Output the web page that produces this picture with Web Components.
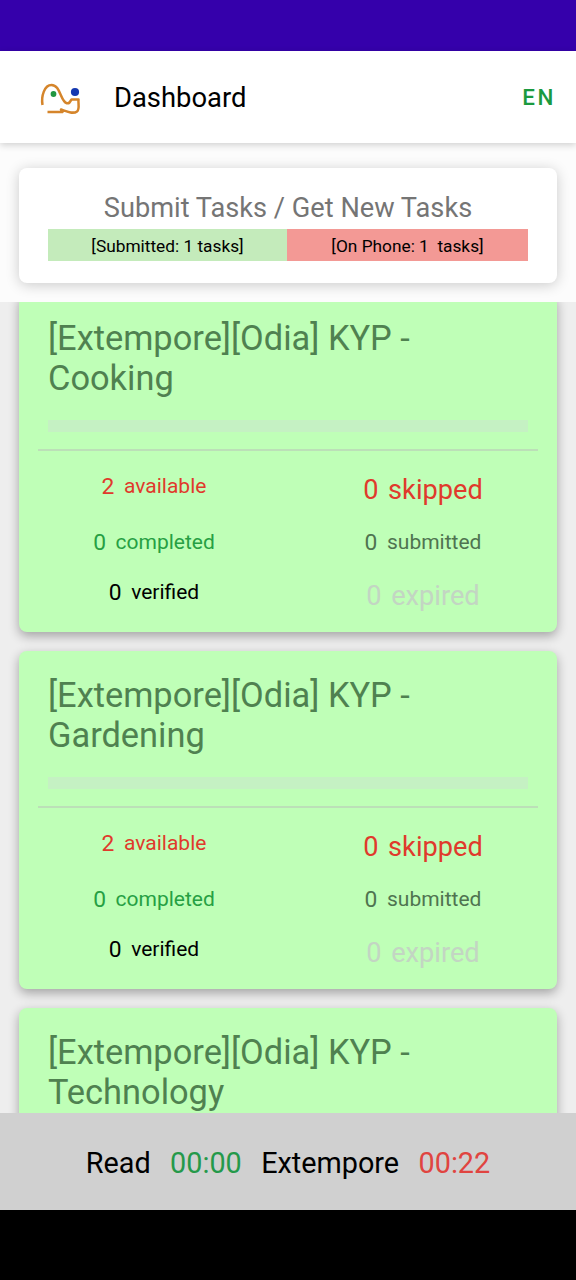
<!DOCTYPE html>
<html lang="en">
<head>
<meta charset="utf-8">
<title>Dashboard</title>
<style>
    body {
        margin: 0;
        width: 576px;
        height: 1280px;
        overflow: hidden;
        display: flex;
        flex-direction: column;
        background: #fcfcfc;
        font-family: Roboto, sans-serif;
        color: #000;
    }
    .status { flex: 0 0 51px; background: #3500ab; }
    .nav { flex: 0 0 70px; background: #000; }
</style>
</head>
<body>
<div class="status"></div>
<app-bar lang-code="EN">Dashboard</app-bar>
<sync-card submitted="1" phone="1">Submit Tasks / Get New Tasks</sync-card>
<task-list>
    <task-card available="2">[Extempore][Odia] KYP - Cooking</task-card>
    <task-card available="2">[Extempore][Odia] KYP - Gardening</task-card>
    <task-card>[Extempore][Odia] KYP - Technology</task-card>
</task-list>
<time-footer read="00:00" extempore="00:22"></time-footer>
<div class="nav"></div>

<script>
class AppBar extends HTMLElement {
    constructor() {
        super();
        this.attachShadow({mode:"open"});
        this.shadowRoot.innerHTML = `
        <style>
        :host {
            display: flex;
            align-items: center;
            flex: 0 0 92px;
            box-sizing: border-box;
            padding: 0 20px 0 37px;
            background: #fff;
            box-shadow: 0 2px 7px rgba(0,0,0,.18);
            z-index: 2;
        }
        svg { width: 46px; height: 46px; margin-right: 31px; }
        h1 { margin: 0; flex: 1; font-size: 27.4px; font-weight: 400; line-height: 32px; padding-top: 2px; }
        span { color: #1b9a3f; font-size: 22.4px; font-weight: 500; letter-spacing: 2.600px; }
        </style>
        <svg viewBox="0 0 46 46" fill="none">
            <path d="M5.500 31C4 22 7.500 11 14.500 11C22 11 23 22 27 27C28.500 29.500 31 30 32.500 28.500L34.500 25.500H41.500C41 30 43 35 40 37.500C36 40.500 29.500 37.500 24 35.500L25.500 38H10.500" stroke="#d5852b" stroke-width="2.5" stroke-linejoin="round"/>
            <circle cx="16.500" cy="20" r="2.900" fill="#209640"/>
            <circle cx="38" cy="18" r="4.100" fill="#1538b0"/>
        </svg>
        <h1><slot></slot></h1>
        <span></span>
        `;
    }
    connectedCallback() {
        this.shadowRoot.querySelector("span").textContent = this.getAttribute("lang-code");
    }
}

class SyncCard extends HTMLElement {
    constructor() {
        super();
        this.attachShadow({mode:"open"});
    }
    connectedCallback() {
        this.shadowRoot.innerHTML = `
        <style>
        :host {
            display: block;
            flex: 0 0 115px;
            box-sizing: border-box;
            margin: 25px 19px 19px;
            padding: 24px 29px 0;
            border-radius: 8px;
            background: #fff;
            box-shadow: 0 2px 14px rgba(0,0,0,.2);
        }
        .title { height: 37px; line-height: 33px; font-size: 27.2px; color: #757575; text-align: center; }
        .counts { display: flex; height: 32px; font-size: 17.3px; line-height: 34px; text-align: center; white-space: pre; }
        .sent { flex: 0 0 239px; background: #c4ebbb; }
        .phone { flex: 1; background: #f39995; }
        </style>
        <div class="title"><slot></slot></div>
        <div class="counts"><div class="sent">[Submitted: ${this.getAttribute("submitted")} tasks]</div><div class="phone">[On Phone: ${this.getAttribute("phone")}  tasks]</div></div>
        `;
    }
}

class TaskList extends HTMLElement {
    constructor() {
        super();
        this.attachShadow({mode:"open"});
        // the list is scrolled a little, so the first card starts above the edge
        this.shadowRoot.innerHTML = `
        <style>
        :host {
            display: block;
            flex: 1 1 0;
            min-height: 0;
            overflow: hidden;
            background: #eeeeee;
            z-index: 1;
        }
        .items { display: flex; flex-direction: column; gap: 19px; margin: -8px 19px 0; }
        </style>
        <div class="items"><slot></slot></div>
        `;
    }
}

class TaskCard extends HTMLElement {
    constructor() {
        super();
        this.attachShadow({mode:"open"});
    }
    count(name, cls) {
        return `<div class="count ${cls}"><b>${this.getAttribute(name) || 0}</b><span>${name}</span></div>`;
    }
    // counts are only there once the task has some
    counts() {
        if(!this.hasAttribute("available")) return "";
        return `
        <div class="counts">
            ${this.count("available", "red")}
            ${this.count("skipped", "big red")}
            ${this.count("completed", "green")}
            ${this.count("submitted", "grey")}
            ${this.count("verified", "")}
            ${this.count("expired", "big pale")}
        </div>`;
    }
    connectedCallback() {
        this.shadowRoot.innerHTML = `
        <style>
        :host {
            display: block;
            flex: 0 0 338px;
            box-sizing: border-box;
            padding-top: 24px;
            border-radius: 8px;
            background: #bfffb7;
            box-shadow: 0 4px 11px rgba(0,0,0,.32);
        }
        .title { margin: 0 29px; width: 400px; height: 80px; font-size: 34.4px; line-height: 40px; color: #4f8150; }
        .progress { height: 12px; margin: 22px 29px 17px; background: #c5f1c3; }
        .line { height: 2px; margin: 0 19px; background: #bcdfb8; }
        .counts { display: grid; grid-template-columns: 1fr 1fr; grid-template-rows: 56px 50px 40px; padding-top: 21px; }
        .count { display: flex; justify-content: center; align-items: center; height: 28px; gap: 9.6px; padding-left: 1px; font-size: 21px; }
        b { font-size: 22.8px; font-weight: 400; }
        .big { height: 35px; font-size: 27.2px; }
        .big b { font-size: 27.2px; }
        .red { color: #e03a2c; }
        .green { color: #26a043; }
        .grey { color: #4f7450; }
        .pale { color: #c3d5c3; }
        </style>
        <div class="title"><slot></slot></div>
        <div class="progress"></div>
        <div class="line"></div>
        ${this.counts()}
        `;
    }
}

class TimeFooter extends HTMLElement {
    constructor() {
        super();
        this.attachShadow({mode:"open"});
    }
    connectedCallback() {
        this.shadowRoot.innerHTML = `
        <style>
        :host {
            display: flex;
            flex: 0 0 97px;
            box-sizing: border-box;
            padding-top: 2px;
            justify-content: center;
            align-items: center;
            gap: 19.4px;
            background: #d0d0d0;
            font-size: 28.8px;
            z-index: 2;
        }
        .read { color: #25994a; }
        .ext { color: #e04440; }
        </style>
        <span>Read</span><span class="read">${this.getAttribute("read")}</span>
        <span>Extempore</span><span class="ext">${this.getAttribute("extempore")}</span>
        `;
    }
}

customElements.define("app-bar", AppBar);
customElements.define("sync-card", SyncCard);
customElements.define("task-list", TaskList);
customElements.define("task-card", TaskCard);
customElements.define("time-footer", TimeFooter);
</script>
</body>
</html>
